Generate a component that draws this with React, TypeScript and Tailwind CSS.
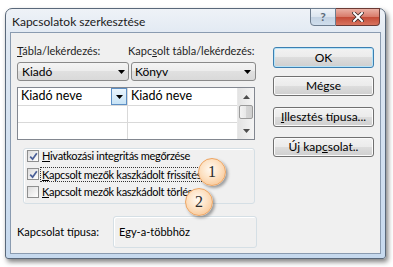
import React from "react";

function Tri({ color = "#000" }: { color?: string }) {
  return (
    <svg width="7" height="4" viewBox="0 0 7 4">
      <path d="M0 0H7L3.5 4Z" fill={color} />
    </svg>
  );
}

function TriUp({ color = "#4d4d4d" }: { color?: string }) {
  return (
    <svg width="7" height="4" viewBox="0 0 7 4">
      <path d="M0 4H7L3.5 0Z" fill={color} />
    </svg>
  );
}

function Btn({
  children,
  def = false,
  className = "",
}: {
  children: React.ReactNode;
  def?: boolean;
  className?: string;
}) {
  return (
    <div
      className={`h-[20px] w-[101px] rounded-[3px] border ${
        def
          ? "border-[#3c7fb1] shadow-[inset_0_0_0_1px_#b6e3f8]"
          : "border-[#707070] shadow-[inset_0_0_0_1px_#fbfbfb]"
      } bg-[linear-gradient(#f2f2f2_0%,#ebebeb_50%,#dddddd_50%,#cfcfcf_100%)] flex items-center justify-center leading-none whitespace-nowrap ${className}`}
    >
      {children}
    </div>
  );
}

function Check({ checked }: { checked: boolean }) {
  return (
    <div className="w-[12px] h-[12px] border border-[#8e8f8f] bg-[linear-gradient(135deg,#dcdcdc,#ffffff)] flex items-center justify-center shrink-0">
      {checked && (
        <svg width="9" height="9" viewBox="0 0 9 9">
          <path d="M1.2 4.6 L3.6 7.2 L7.8 1.2" stroke="#4a5f97" strokeWidth="1.7" fill="none" />
        </svg>
      )}
    </div>
  );
}

function Badge({ n, className }: { n: string; className: string }) {
  return (
    <div
      className={`absolute w-[28px] h-[28px] rounded-full border border-[#eea562] bg-[radial-gradient(circle_at_45%_40%,#fffaf3_0%,#fde2c4_45%,#f6bb82_100%)] shadow-[2px_2px_3px_rgba(0,0,0,0.35)] flex items-center justify-center font-['Liberation_Serif',serif] text-[16px] text-[#2a2a2a] leading-none ${className}`}
    >
      {n}
    </div>
  );
}

export default function App() {
  return (
    <div className="relative w-[393px] h-[267px] bg-white overflow-hidden pt-[8px] pl-[5px] font-['Lato','Noto_Sans',sans-serif] text-[12px] text-black">
      <div className="relative w-[381px] h-[251px] rounded-t-[7px] rounded-b-[3px] border border-[#59687a] bg-[linear-gradient(#eef2f7_0%,#dfe8f2_12%,#c6d9ee_100%)] shadow-[2px_3px_5px_rgba(0,0,0,0.5)] flex flex-col">
        {/* title bar */}
        <div className="h-[23px] flex items-start pl-[6px] pt-[5px] leading-[15px] text-[#1a1a1a] whitespace-nowrap">
          Kapcsolatok szerkesztése
        </div>
        <div className="absolute top-[-1px] right-[5px] flex">
          <div className="w-[26px] h-[18px] rounded-bl-[4px] border border-[#6d7d8f] bg-[linear-gradient(#eef3f8_0%,#dbe5ef_50%,#c3d2e2_50%,#cfdeed_100%)] flex items-center justify-center text-[12px] font-bold text-[#5b6978] leading-none">
            ?
          </div>
          <div className="w-[44px] h-[18px] rounded-br-[4px] border border-l-0 border-[#6a3a35] bg-[linear-gradient(#eab0a4_0%,#d87a69_50%,#c34a36_50%,#d8745f_100%)] flex items-center justify-center">
            <svg width="12" height="10" viewBox="0 0 12 10">
              <path d="M2 1 L10 9 M10 1 L2 9" stroke="#3a2a28" strokeWidth="3.6" strokeLinecap="square" />
              <path d="M2 1 L10 9 M10 1 L2 9" stroke="#ffffff" strokeWidth="2" strokeLinecap="square" />
            </svg>
          </div>
        </div>

        {/* client area */}
        <div className="mx-[4px] h-[222px] border border-[#8a9bb0] bg-[#f0f0f0] flex">
          {/* left column */}
          <div className="ml-[6px] w-[240px] flex flex-col">
            <div className="mt-[10px] h-[15px] flex leading-[15px] text-[11px] text-[#1e1e1e] whitespace-nowrap">
              <span className="w-[111px]">
                <span className="underline">T</span>ábla/lekérdezés:
              </span>
              <span>
                Kapc<span className="underline">s</span>olt tábla/lekérdezés:
              </span>
            </div>
            <div className="mt-[4px] flex gap-[2px]">
              <div className="w-[112px] h-[19px] rounded-[3px] border border-[#8a8a8a] bg-[linear-gradient(#f4f4f4_0%,#ececec_50%,#e0e0e0_50%,#d9d9d9_100%)] flex items-center pl-[4px] pr-[3px]">
                <span className="flex-1">Kiadó</span>
                <Tri />
              </div>
              <div className="w-[125px] h-[19px] rounded-[3px] border border-[#8a8a8a] bg-[linear-gradient(#f4f4f4_0%,#ececec_50%,#e0e0e0_50%,#d9d9d9_100%)] flex items-center pl-[3px] pr-[4px]">
                <span className="flex-1">Könyv</span>
                <Tri />
              </div>
            </div>

            {/* grid */}
            <div className="mt-[6px] w-[238px] h-[53px] border border-[#828790] bg-white flex">
              <div className="w-[219px] flex flex-col">
                <div className="h-[18px] flex border-b border-[#d9d9d9] text-[12.5px]">
                  <div className="w-[110px] border-r border-[#d9d9d9] flex items-center pl-[3px]">
                    <span className="flex-1">Kiadó neve</span>
                    <div className="w-[16px] h-[17px] border border-[#5d8fc4] bg-[linear-gradient(#eaf5fd,#c7e3f6)] flex items-center justify-center">
                      <Tri />
                    </div>
                  </div>
                  <div className="flex-1 flex items-center pl-[3px]">Kiadó neve</div>
                </div>
                <div className="h-[17px] flex border-b border-[#d9d9d9]">
                  <div className="w-[110px] border-r border-[#d9d9d9]" />
                  <div className="flex-1" />
                </div>
                <div className="flex-1 flex">
                  <div className="w-[110px] border-r border-[#d9d9d9]" />
                  <div className="flex-1" />
                </div>
              </div>
              {/* scrollbar */}
              <div className="w-[17px] flex flex-col bg-[linear-gradient(90deg,#e3e3e3,#f5f5f5)] border-l border-[#e8e8e8]">
                <div className="h-[17px] flex items-center justify-center">
                  <TriUp />
                </div>
                <div className="mx-[1px] h-[14px] rounded-[2px] border border-[#9b9b9b] bg-[linear-gradient(90deg,#f3f3f3_0%,#e8e8e8_50%,#d6d6d6_50%,#cfcfcf_100%)]" />
                <div className="flex-1" />
                <div className="h-[17px] flex items-center justify-center">
                  <Tri color="#4d4d4d" />
                </div>
              </div>
            </div>

            {/* checkbox group */}
            <div className="mt-[8px] ml-[6px] w-[232px] h-[56px] rounded-[3px] border border-[#d5dfe5] shadow-[inset_1px_1px_0_#ffffff] flex flex-col whitespace-nowrap text-[11px] tracking-[-0.3px]">
              <div className="mt-[-2px] h-[18px] flex items-center pl-[3px] gap-[3px]">
                <Check checked />
                <span>
                  <span className="underline">H</span>ivatkozási integritás megőrzése
                </span>
              </div>
              <div className="h-[18px] flex items-center pl-[3px] gap-[2px]">
                <Check checked />
                <span className="outline outline-1 outline-dotted outline-[#333] pl-[1px] pr-[6px] leading-[13px]">
                  <span className="underline">K</span>apcsolt mezők kaszkádolt frissítése
                </span>
              </div>
              <div className="h-[18px] flex items-center pl-[3px] gap-[3px]">
                <Check checked={false} />
                <span>
                  <span className="underline">K</span>apcsolt mezők kaszkádolt törlése
                </span>
              </div>
            </div>

            {/* relationship type */}
            <div className="mt-[12px] flex items-center whitespace-nowrap text-[11px]">
              <span className="w-[96px]">Kapcsolat típusa:</span>
              <div className="w-[144px] h-[32px] rounded-[3px] border border-[#d5dfe5] shadow-[inset_1px_1px_0_#ffffff] flex items-center pl-[5px]">
                Egy-a-többhöz
              </div>
            </div>
          </div>

          {/* right column: buttons */}
          <div className="ml-[16px] flex flex-col">
            <Btn def className="mt-[14px] h-[21px]">OK</Btn>
            <Btn className="mt-[8px]">Mégse</Btn>
            <Btn className="mt-[11px]">
              <span>
                <span className="underline">I</span>llesztés típusa...
              </span>
            </Btn>
            <Btn className="mt-[10px]">
              <span>
                Új kap<span className="underline">c</span>solat..
              </span>
            </Btn>
          </div>
        </div>
      </div>

      <Badge n="1" className="left-[198px] top-[158px]" />
      <Badge n="2" className="left-[185px] top-[188px]" />
    </div>
  );
}
